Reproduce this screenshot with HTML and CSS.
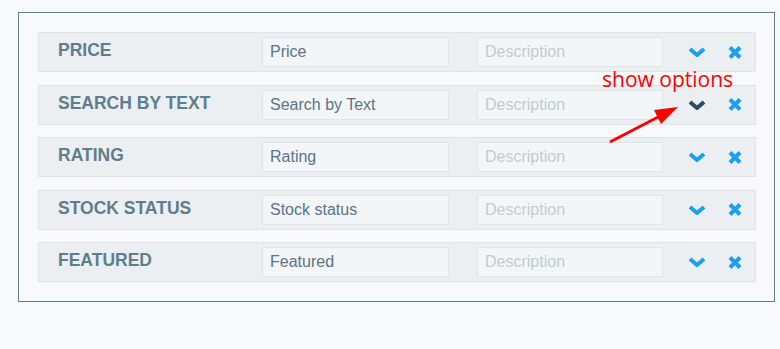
FILE: index.html
```html
<!DOCTYPE html>
<html lang="en">
<head>
    <meta charset="UTF-8">
    <meta name="viewport" content="width=device-width, initial-scale=1.0">
    <title>Filter Fields</title>
    <link rel="stylesheet" href="styles.css">
</head>
<body>
    <div class="fields-panel">
        <div class="field-row">
            <span class="field-name">PRICE</span>
            <input type="text" class="field-input" value="Price">
            <input type="text" class="field-input desc" placeholder="Description">
            <button class="icon-btn toggle" title="Show options">
                <svg width="18" height="10" viewBox="0 0 18 10"><polyline points="2,2 9,8 16,2" /></svg>
            </button>
            <button class="icon-btn remove" title="Remove">
                <svg width="14" height="13" viewBox="0 0 14 13"><path d="M2 1.5 L12 11.5 M12 1.5 L2 11.5" /></svg>
            </button>
        </div>

        <div class="field-row">
            <span class="field-name">SEARCH BY TEXT</span>
            <input type="text" class="field-input" value="Search by Text">
            <input type="text" class="field-input desc" placeholder="Description">
            <button class="icon-btn toggle active" title="Show options">
                <svg width="18" height="10" viewBox="0 0 18 10"><polyline points="2,2 9,8 16,2" /></svg>
            </button>
            <button class="icon-btn remove" title="Remove">
                <svg width="14" height="13" viewBox="0 0 14 13"><path d="M2 1.5 L12 11.5 M12 1.5 L2 11.5" /></svg>
            </button>
        </div>

        <div class="field-row">
            <span class="field-name">RATING</span>
            <input type="text" class="field-input" value="Rating">
            <input type="text" class="field-input desc" placeholder="Description">
            <button class="icon-btn toggle" title="Show options">
                <svg width="18" height="10" viewBox="0 0 18 10"><polyline points="2,2 9,8 16,2" /></svg>
            </button>
            <button class="icon-btn remove" title="Remove">
                <svg width="14" height="13" viewBox="0 0 14 13"><path d="M2 1.5 L12 11.5 M12 1.5 L2 11.5" /></svg>
            </button>
        </div>

        <div class="field-row">
            <span class="field-name">STOCK STATUS</span>
            <input type="text" class="field-input" value="Stock status">
            <input type="text" class="field-input desc" placeholder="Description">
            <button class="icon-btn toggle" title="Show options">
                <svg width="18" height="10" viewBox="0 0 18 10"><polyline points="2,2 9,8 16,2" /></svg>
            </button>
            <button class="icon-btn remove" title="Remove">
                <svg width="14" height="13" viewBox="0 0 14 13"><path d="M2 1.5 L12 11.5 M12 1.5 L2 11.5" /></svg>
            </button>
        </div>

        <div class="field-row">
            <span class="field-name">FEATURED</span>
            <input type="text" class="field-input" value="Featured">
            <input type="text" class="field-input desc" placeholder="Description">
            <button class="icon-btn toggle" title="Show options">
                <svg width="18" height="10" viewBox="0 0 18 10"><polyline points="2,2 9,8 16,2" /></svg>
            </button>
            <button class="icon-btn remove" title="Remove">
                <svg width="14" height="13" viewBox="0 0 14 13"><path d="M2 1.5 L12 11.5 M12 1.5 L2 11.5" /></svg>
            </button>
        </div>
    </div>

    <!-- annotation drawn over the screenshot -->
    <div class="note-text">show options</div>
    <svg class="note-arrow" width="780" height="349" viewBox="0 0 780 349">
        <line x1="610" y1="142" x2="662" y2="115" />
        <polygon points="678,107 654,110 661,124" />
    </svg>
</body>
</html>
```

FILE: styles.css
```css
body {
    font-family: "Liberation Sans", Arial, sans-serif;
    background-color: #f8f9fb;
    margin: 0;
    padding: 12px 0 0 18px;
    position: relative;
    height: 349px;
    box-sizing: border-box;
    overflow: hidden;
}

.fields-panel {
    width: 757px;
    box-sizing: border-box;
    border: 1px solid #627e8c;
    padding: 19px 18px 19px 19px;
    display: flex;
    flex-direction: column;
    gap: 12.5px;
}

.field-row {
    display: flex;
    align-items: center;
    height: 40px;
    box-sizing: border-box;
    background-color: #eceff1;
    border: 1px solid #e0e4e7;
    padding-left: 19px;
}

.field-name {
    width: 204px;
    font-size: 17.5px;
    font-weight: bold;
    color: #607d8b;
    margin-top: -3px;
}

.field-input {
    width: 187px;
    height: 30px;
    box-sizing: border-box;
    border: 1px solid #e1e5e9;
    background-color: #f3f6f9;
    padding: 0 7px;
    font-family: "Liberation Sans", Arial, sans-serif;
    font-size: 16px;
    color: #5b7384;
    outline: none;
}

.field-input.desc {
    margin-left: 28px;
    width: 186px;
}

.field-input::placeholder {
    color: #c3cbd2;
}

.icon-btn {
    background: none;
    border: none;
    padding: 0;
    display: flex;
    cursor: pointer;
}

.icon-btn svg {
    fill: none;
    stroke: #1c9ff1;
    stroke-width: 4;
}

.toggle {
    margin-left: 25px;
}

.toggle.active svg {
    stroke: #2c4a68;
}

.remove {
    margin-left: 22px;
}

.note-text {
    position: absolute;
    left: 602px;
    top: 65px;
    font-family: "Open Sans", sans-serif;
    font-size: 21px;
    color: #ff0000;
}

.note-arrow {
    position: absolute;
    left: 0;
    top: 0;
    pointer-events: none;
}

.note-arrow line {
    stroke: #ff0000;
    stroke-width: 3;
}

.note-arrow polygon {
    fill: #ff0000;
}
```
